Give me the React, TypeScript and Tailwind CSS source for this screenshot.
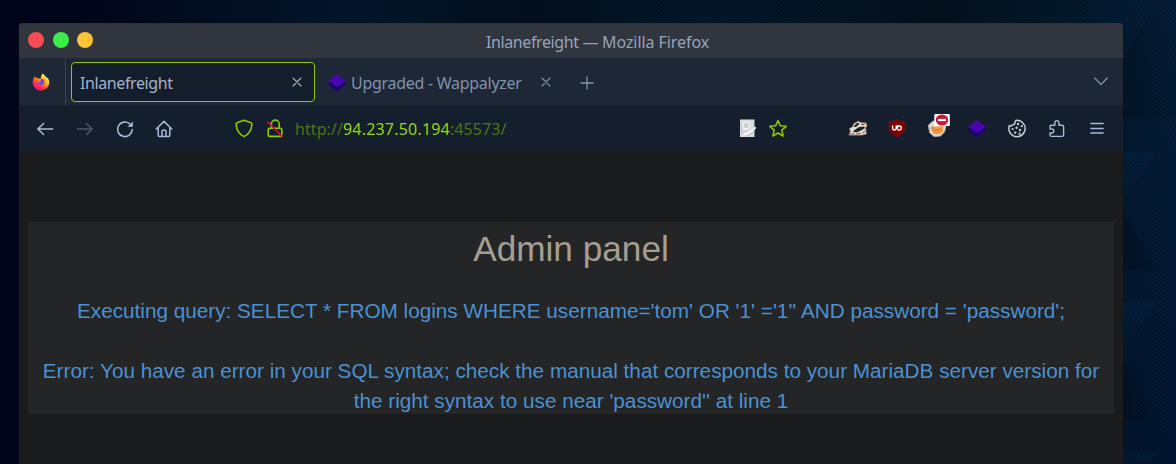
import type { ReactNode } from "react";

function Icon({ className = "", children }: { className?: string; children: ReactNode }) {
  return (
    <svg
      width="24"
      height="24"
      viewBox="0 0 24 24"
      fill="none"
      stroke="currentColor"
      strokeWidth="1.6"
      strokeLinecap="round"
      strokeLinejoin="round"
      className={`shrink-0 overflow-visible ${className}`}
    >
      {children}
    </svg>
  );
}

function Wallpaper() {
  return (
    <svg className="absolute inset-0 h-full w-full" viewBox="0 0 1176 464" preserveAspectRatio="none">
      <defs>
        <linearGradient id="sky" x1="0" x2="1" y1="0" y2="0">
          <stop offset="0" stopColor="#01041d" />
          <stop offset="0.12" stopColor="#010a1f" />
          <stop offset="0.3" stopColor="#03172f" />
          <stop offset="0.45" stopColor="#02101f" />
          <stop offset="0.6" stopColor="#03182e" />
          <stop offset="0.8" stopColor="#03121f" />
          <stop offset="1" stopColor="#03203b" />
        </linearGradient>
        <linearGradient id="dusk" x1="0" x2="0" y1="0" y2="1">
          <stop offset="0" stopColor="#021230" stopOpacity="0" />
          <stop offset="1" stopColor="#021230" stopOpacity="0.6" />
        </linearGradient>
        <linearGradient id="facet" x1="0" x2="1" y1="1" y2="0.6">
          <stop offset="0" stopColor="#010f1c" stopOpacity="0.6" />
          <stop offset="1" stopColor="#010f1c" stopOpacity="0.1" />
        </linearGradient>
        <linearGradient id="glint" x1="0" x2="0" y1="0" y2="1">
          <stop offset="0" stopColor="#04294a" stopOpacity="0.4" />
          <stop offset="1" stopColor="#04294a" stopOpacity="0" />
        </linearGradient>
        <pattern id="weave" width="5" height="4" patternUnits="userSpaceOnUse">
          <path d="M-1.25 1L1.25 -1M-1.25 5L6.25 -1M3.75 5L6.25 3" stroke="#000" strokeOpacity="0.28" strokeWidth="1.3" />
        </pattern>
      </defs>
      <rect width="1176" height="464" fill="url(#sky)" />
      <rect x="1120" width="56" height="464" fill="url(#dusk)" />
      <path d="M1158 4L1176 40V119H1120V60Z" fill="url(#facet)" fillOpacity="0.7" />
      <path d="M1120 152H1156L1120 205Z" fill="url(#glint)" />
      <path d="M1120 205L1156 270H1120Z" fill="url(#facet)" />
      <path d="M1120 303H1156L1120 355Z" fill="url(#glint)" />
      <path d="M1120 355L1156 421H1120Z" fill="url(#facet)" />
      <path d="M1120 454H1156L1148 464H1120Z" fill="url(#glint)" />
      <rect width="1176" height="464" fill="url(#weave)" />
    </svg>
  );
}

function Diamond() {
  return (
    <Icon>
      <path d="M3.5 14.5L12 21.3L20.5 14.5L19 11H5Z" fill="#1f0071" stroke="none" />
      <path d="M12 4L21 10.8L12 17L3 10.8Z" fill="#4608ad" stroke="none" />
    </Icon>
  );
}

function Firefox() {
  return (
    <svg width="18" height="18" viewBox="0 0 18 18">
      <defs>
        <linearGradient id="fx" x1="0.85" y1="0.05" x2="0.2" y2="0.95">
          <stop offset="0.1" stopColor="#fff44f" />
          <stop offset="0.45" stopColor="#ff980e" />
          <stop offset="0.7" stopColor="#ff3647" />
          <stop offset="1" stopColor="#e31587" />
        </linearGradient>
      </defs>
      <path
        d="M10.8 0.5C12 2 13 2.6 13.7 3.7C16.2 4.5 17.4 7.1 17.3 9.6C17.1 14.1 13.6 17.5 9 17.5C4.4 17.5 0.8 14 0.7 9.4C0.6 7 1.5 5 2.5 3.4L3.2 5L4.6 3.7L5.2 5.4C6.5 5 7.6 5.4 8.5 6.3C8.7 3.9 9.5 1.8 10.8 0.5Z"
        fill="url(#fx)"
      />
      <path d="M9.5 5.8C11.6 5.8 12.6 7.6 12.4 9.3C12.1 11.2 10.7 12.1 8.9 12C7.1 11.9 5.9 10.7 5.8 9.3C7 9.9 8.1 9.6 9.1 8.6L6.9 7.8C7.7 7.7 9.3 7.6 9.5 5.8Z" fill="#7542e5" />
    </svg>
  );
}

function Close() {
  return (
    <svg width="10" height="10" viewBox="0 0 10 10" stroke="currentColor" strokeWidth="1.1" strokeLinecap="round">
      <path d="M1 1L9 9M9 1L1 9" />
    </svg>
  );
}

function TitleBar() {
  return (
    <header className="flex h-[35px] items-center rounded-t-[3px] border-t border-[#283241] bg-[#31353e]">
      <div className="flex w-[467px] gap-[8.3px] pb-[2px] pl-[9.3px]">
        <span className="size-4 rounded-full bg-[#f84d55]" />
        <span className="size-4 rounded-full bg-[#3bec4b]" />
        <span className="size-4 rounded-full bg-[#fdc236]" />
      </div>
      <h1 className="pt-[2px] text-[16px] leading-none whitespace-nowrap text-[#93a4bd]">
        <span className="tracking-[-0.4px]">Inlanefreight</span>
        <span className="tracking-[-0.3px]"> — </span>
        <span className="tracking-[-0.07px]">Mozilla Firefox</span>
      </h1>
    </header>
  );
}

function TabBar() {
  return (
    <nav className="flex h-[47px] items-center bg-[#1e2736] text-[16px] text-[#98a9c4]">
      <div className="flex h-full w-[47px] items-center border-r border-[#39424f] pl-[13px]">
        <Firefox />
      </div>
      <div className="mt-1 ml-[5px] flex h-10 w-[244px] items-center justify-between self-start rounded-[4px] border border-[#8dc800] bg-[#141d2b] pr-[12px] pl-[8px] text-[#a3b3ce]">
        <span className="pt-px tracking-[-0.4px]">Inlanefreight</span>
        <Close />
      </div>
      <div className="ml-[10px] flex items-center">
        <Diamond />
        <span className="ml-[2px] w-[190px] pt-[2px] tracking-[-0.28px] whitespace-nowrap text-[#7f92ae]">Upgraded - Wappalyzer</span>
        <span className="text-[#7f92ae]">
          <Close />
        </span>
      </div>
      <svg className="mt-[2px] ml-[29px]" width="14" height="14" viewBox="0 0 14 14" stroke="#8495af" strokeWidth="1.3">
        <path d="M7 0.5V13.5M0.5 7H13.5" />
      </svg>
      <svg className="mr-[15px] ml-auto" width="14" height="9" viewBox="0 0 14 9" fill="none" stroke="#7f90aa" strokeWidth="1.3" strokeLinecap="round">
        <path d="M0.8 1L7 7.5L13.2 1" />
      </svg>
    </nav>
  );
}

function Controls() {
  return (
    <div className="flex gap-4 text-[#a9b9d9]">
      <Icon>
        <path d="M5 13H19.6M10.6 7.5L4.8 13L10.6 18.5" strokeWidth="1.5" />
      </Icon>
      <Icon className="text-[#4b5667]">
        <path d="M4.4 13H19M13.4 7.5L19.2 13L13.4 18.5" strokeWidth="1.5" />
      </Icon>
      <Icon>
        <path d="M19.2 13.5A7.3 7.3 0 1 1 16.5 7.6" />
        <path d="M19.8 5.5V10.8H14.5Z" fill="currentColor" stroke="none" />
      </Icon>
      <Icon className="-ml-[1px]">
        <path d="M4.2 13L12 5.4L19.8 13M6.2 11.5V19.2Q6.2 20.5 7.5 20.5H16.5Q17.8 20.5 17.8 19.2V11.5M10 20.3V15.5Q10 14 12 14Q14 14 14 15.5V20.3" strokeWidth="1.5" />
      </Icon>
    </div>
  );
}

function Address() {
  return (
    <div className="ml-[56px] flex items-center text-[#8dc800]">
      <Icon>
        <path d="M12 4.2L19 6.8Q20 7.2 19.9 8.3C19.6 13.7 17 18.2 12 20.6C7 18.2 4.4 13.7 4.1 8.3Q4 7.2 5 6.8Z" />
      </Icon>
      <Icon className="ml-[7px]">
        <path d="M8.4 12V8A3.9 3.9 0 0 1 16.2 8V12M6.5 12.2H17.5Q18.8 12.2 18.8 13.4V19.2Q18.8 20.4 17.5 20.4H6.5Q5.2 20.4 5.2 19.2V13.4Q5.2 12.2 6.5 12.2Z" />
        <path d="M4.7 6L19.4 20.8" stroke="#d9123f" />
      </Icon>
      <span className="ml-[8px] pt-[2px] text-[16px] leading-none tracking-[0.07px] whitespace-nowrap text-[#4d7318]">
        http://<span className="tracking-[0.2px] text-[#95d610]">94.237.50.194</span>:45573/
      </span>
    </div>
  );
}

function Extensions() {
  return (
    <div className="ml-auto flex items-center pr-[14px] text-[#a9b9d9]">
      <Icon>
        <rect x="5" y="3.5" width="14.5" height="17.5" fill="#d9dbdd" stroke="none" />
        <circle cx="11.3" cy="9.5" r="3.4" stroke="#f4f4f4" fill="#cdd0d2" strokeWidth="1.3" />
        <path d="M6.5 8V17H12" stroke="#c2c5c8" strokeWidth="1" />
        <path d="M9 18.5Q15 17 20.3 11.8" stroke="#fff" strokeWidth="1.8" />
        <path d="M12 19.5Q16 18 19 15.5" stroke="#b4b8bb" strokeWidth="0.9" />
      </Icon>
      <Icon className="ml-[7px] text-[#8dc800]">
        <path d="M12 4.5L14.4 9.8L20.2 10.3L15.8 14.2L17.1 20L12 17L6.9 20L8.2 14.2L3.8 10.3L9.6 9.8Z" />
      </Icon>
      <Icon className="ml-[56px]">
        <path d="M3.2 18.8L4.5 15.5L3.5 12.5L6.5 11L8 7.5L12.5 5.2L15 6.8L20 7L20.8 9.5L19.6 12L20.3 18L16 19Z" fill="#e4dfd9" stroke="#c08a63" strokeWidth="0.8" />
        <path d="M7.5 11L10 7.5L13.2 6.8L13 8.5L10 11Z" fill="#2c2b2e" stroke="none" />
        <path d="M6.5 15.5L13 11L18 10.5L19.2 12L15.5 14.2L10.5 16.5Z" fill="#232327" stroke="none" />
        <path d="M5 18L8 17.6M10.5 18L14.5 17.2M17 16.8L18.5 15.2" stroke="#77726d" strokeWidth="1.2" />
        <path d="M15.5 8.6L18.5 8.2" stroke="#4b4744" strokeWidth="1" />
      </Icon>
      <Icon className="ml-[15px]">
        <path d="M12 3.5Q15.5 5.8 20 6V12.5Q19.3 18 12 21Q4.7 18 4 12.5V6Q8.5 5.8 12 3.5Z" fill="#800000" stroke="#6d1c22" strokeWidth="0.6" />
        <path d="M7.6 10V12Q7.6 14 9.4 14Q11.2 14 11.2 12V10M13 14H14Q16.4 14 16.4 12Q16.4 10 14 10H12.6V12.2" stroke="#fff" strokeWidth="1.4" />
      </Icon>
      <Icon className="ml-4">
        <path d="M3.5 9L8 5L17 6L21 10L19.5 16L15.5 20L9 20.5L5 17Z" fill="#e8ddd1" stroke="#a9a9ad" strokeWidth="1" />
        <path d="M6 10L11 11L18.5 10L18 15.5L15 18L9 18L6.5 15Z" fill="#f39b3c" stroke="none" />
        <path d="M7 12L11 14.5L15.5 13" stroke="#c97a35" strokeWidth="1" />
        <rect x="9.3" y="-2" width="15.5" height="12" rx="1" fill="#fff" stroke="none" />
        <ellipse cx="17" cy="4" rx="6.2" ry="5.5" fill="#c61b36" stroke="none" />
        <path d="M13 4H21" stroke="#fff" strokeWidth="2.2" strokeLinecap="butt" />
      </Icon>
      <span className="ml-4">
        <Diamond />
      </span>
      <Icon className="ml-4 text-[#c9ccd1]">
        <path
          d="M11 4.4C16 3.9 20.2 7.8 20.2 12.6A8.2 8.2 0 0 1 3.8 12.4L4.3 9.6Q6.3 10.8 7.7 8.7Q10.3 8.4 9.9 6.2Z"
          strokeWidth="1.5"
        />
        <g fill="currentColor" stroke="none">
          <circle cx="13" cy="8" r="1.2" />
          <circle cx="16.8" cy="10.2" r="1.1" />
          <circle cx="11.6" cy="11.8" r="1.2" />
          <circle cx="7.6" cy="13" r="1.1" />
          <circle cx="15" cy="14" r="1.2" />
          <circle cx="10.2" cy="16.6" r="1.2" />
          <circle cx="14.6" cy="17.7" r="1.1" />
        </g>
      </Icon>
      <Icon className="ml-4">
        <path
          d="M9.9 9.2V6.6A2 2 0 0 1 13.9 6.6V9.2H17.2Q18.6 9.2 18.6 10.6V19Q18.6 20.4 17.2 20.4H6.4Q5 20.4 5 19V17H6.8A1.9 1.9 0 0 0 6.8 13H5V10.6Q5 9.2 6.4 9.2Z"
          strokeWidth="1.4"
        />
      </Icon>
      <Icon className="ml-4">
        <path d="M5.8 7.5H18.2M5.8 12.5H18.2M5.8 17H18.2" strokeWidth="1.3" />
      </Icon>
    </div>
  );
}

export default function App() {
  return (
    <div className="relative flex h-[464px] w-[1176px] overflow-hidden bg-[#020b1c] pt-[23px] pl-[19px] font-['Noto_Sans',sans-serif]">
      <Wallpaper />
      <main className="relative flex w-[1104px] flex-col">
        <TitleBar />
        <TabBar />
        <div className="flex h-[46px] items-center bg-[#151e2c] pl-[14px]">
          <Controls />
          <Address />
          <Extensions />
        </div>
        <div className="flex-1 bg-[#191b1c] px-[9px] pt-[71px]">
          <section className="h-[192px] bg-[#232526] text-center font-['Liberation_Sans',Arial,sans-serif] text-[20.73px] leading-[30px] text-[#4b91d1]">
            <h2 className="pt-[8px] text-[35.2px] leading-[38px] text-[#a69e92]">Admin panel</h2>
            <p className="mt-[28px] whitespace-nowrap">
              Executing query: SELECT * FROM logins WHERE username='tom' OR '1' ='1'' AND password = 'password';
            </p>
            <p className="mt-[30px] whitespace-nowrap">
              Error: You have an error in your SQL syntax; check the manual that corresponds to your MariaDB server version for
              <br />
              the right syntax to use near 'password'' at line 1
            </p>
          </section>
        </div>
      </main>
    </div>
  );
}
